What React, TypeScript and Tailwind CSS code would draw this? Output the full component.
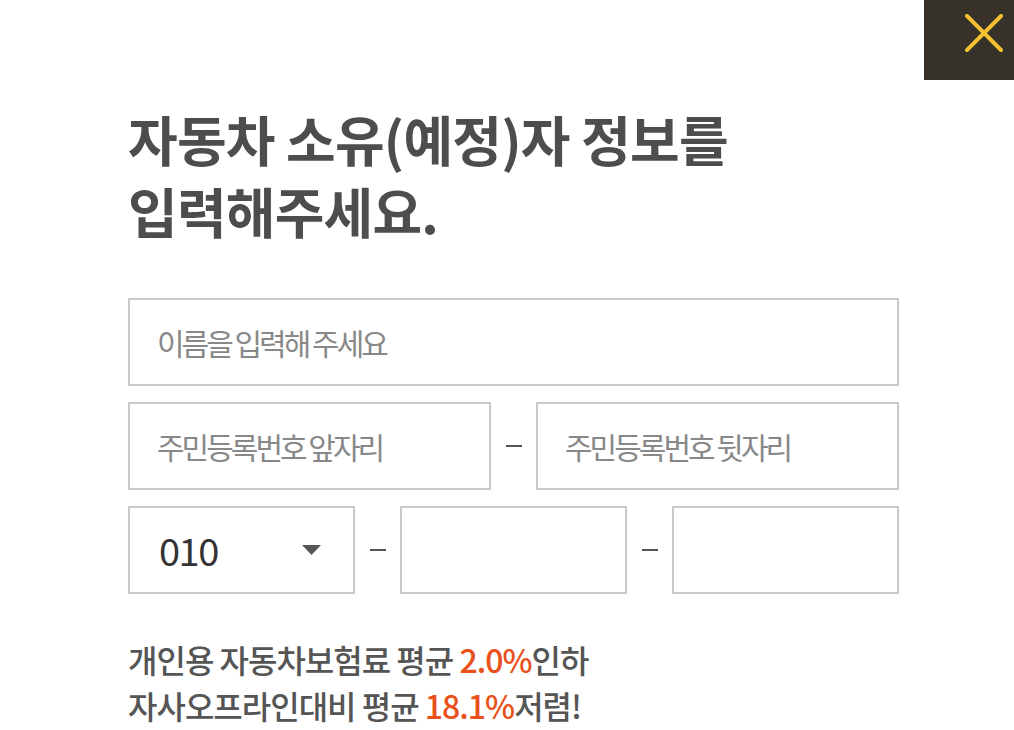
import { useState } from 'react'

const font = { fontFamily: '"Noto Sans CJK KR", "Noto Sans", sans-serif' }

function Dash() {
  return (
    <div className="flex w-[45px] shrink-0 items-center justify-center">
      <span className="block h-[2px] w-4 bg-[#555]" />
    </div>
  )
}

function Field({ placeholder, className = '' }: { placeholder?: string; className?: string }) {
  return (
    <input
      placeholder={placeholder}
      className={`h-[88px] border-2 border-[#c8c8c8] bg-white pl-[27px] text-[30px] tracking-[-3px] text-[#333] outline-none placeholder:text-[#888] ${className}`}
      style={font}
    />
  )
}

export default function App() {
  const [prefix] = useState('010')

  return (
    <div className="relative h-[730px] w-[1014px] overflow-hidden bg-white" style={font}>
      <div className="flex justify-end">
        <button className="relative flex h-[80px] w-[90px] items-start justify-end bg-[#36322a] pr-[11px] pt-[14px]">
          <svg width="38" height="38" viewBox="0 0 38 38">
            <path d="M2 2 L36 36 M36 2 L2 36" stroke="#f4c231" strokeWidth="4" strokeLinecap="square" />
          </svg>
        </button>
      </div>

      <div className="pl-[128px] pr-[115px]">
        <h1 className="mt-[23px] text-[54px] font-bold leading-[72px] tracking-[-0.8px] text-[#4d4d4d]">
          자동차 소유(예정)자 정보를
          <br />
          입력해주세요.
        </h1>

        <div className="mt-[51px] flex flex-col gap-[16px]">
          <Field placeholder="이름을 입력해 주세요" className="w-full" />

          <div className="flex">
            <Field placeholder="주민등록번호 앞자리" className="w-[363px]" />
            <Dash />
            <Field placeholder="주민등록번호 뒷자리" className="w-[363px]" />
          </div>

          <div className="flex">
            <div className="flex h-[88px] w-[227px] items-center justify-between border-2 border-[#c8c8c8] pl-[29px] pr-[32px]">
              <span className="text-[38px] leading-none tracking-[-1.5px] text-[#333]">{prefix}</span>
              <svg width="19" height="10" viewBox="0 0 19 10">
                <path d="M0 0 H19 L9.5 10 Z" fill="#555" />
              </svg>
            </div>
            <Dash />
            <Field className="w-[227px]" />
            <Dash />
            <Field className="w-[227px]" />
          </div>
        </div>

        <div className="mt-[42px] text-[32px] font-medium leading-[46px] tracking-[-1px] text-[#555]">
          <p>
            개인용 자동차보험료 평균 <span className="text-[#e9501a]">2.0%</span>인하
          </p>
          <p>
            자사오프라인대비 평균 <span className="text-[#e9501a]">18.1%</span>저렴!
          </p>
        </div>
      </div>
    </div>
  )
}
